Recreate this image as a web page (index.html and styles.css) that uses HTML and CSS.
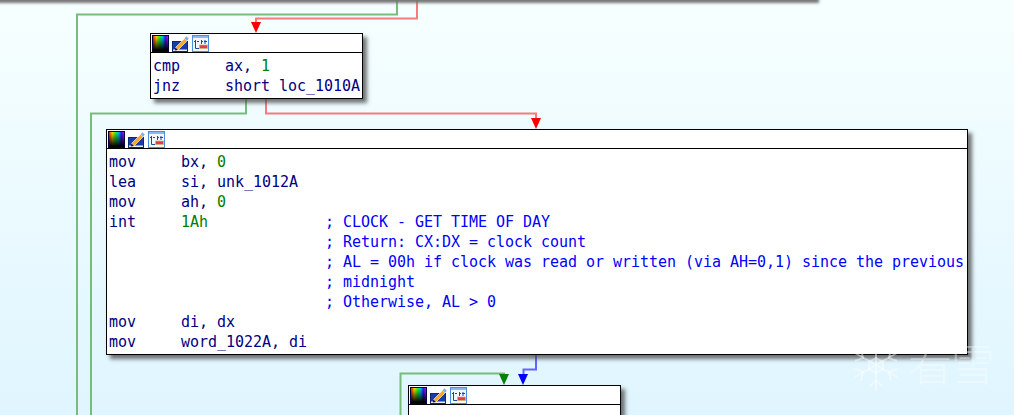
FILE: index.html
```html
<!DOCTYPE html>
<html lang="en">
<head>
<meta charset="utf-8">
<title>Graph view</title>
<link rel="stylesheet" href="styles.css">
</head>
<body>
<svg width="0" height="0" class="defs">
  <defs>
    <linearGradient id="hue" x1="0" y1="0" x2="1" y2="0">
      <stop offset="0" stop-color="#ff2000"/><stop offset=".22" stop-color="#ffe000"/><stop offset=".45" stop-color="#20ff20"/><stop offset=".65" stop-color="#00c0ff"/><stop offset=".82" stop-color="#2020ff"/><stop offset="1" stop-color="#e000e0"/>
    </linearGradient>
    <linearGradient id="dark" x1="0" y1="0" x2="0" y2="1">
      <stop offset="0" stop-color="#000" stop-opacity="0"/><stop offset=".95" stop-color="#000"/>
    </linearGradient>
    <symbol id="i-color" viewBox="0 0 17 17">
      <rect x=".5" y=".5" width="16" height="16" fill="#000020" stroke="#000040"/>
      <rect x="1" y="1" width="15" height="15" fill="url(#hue)"/>
      <rect x="1" y="1" width="15" height="15" fill="url(#dark)"/>
    </symbol>
    <symbol id="i-edit" viewBox="0 0 17 17">
      <rect x=".5" y="6.500" width="15" height="10" fill="#1c3aa8" stroke="#0c2a70"/>
      <rect x="1" y="14.500" width="14" height="1.500" fill="#e8f0fa"/>
      <path d="M3.500 12.500L12.500 3.500L15 6L6 15Z" fill="#f7a92a" stroke="#fff" stroke-width=".6"/>
      <path d="M12.500 3.500L14.400 1.200L16.800 3.600L15 6Z" fill="#7fb3d8"/>
      <path d="M3.500 12.500L2.800 15.500L6 15Z" fill="#20202c"/>
    </symbol>
    <symbol id="i-graph" viewBox="0 0 17 17">
      <rect x=".5" y=".5" width="16" height="16" fill="#f2f7ff" stroke="#4a8ce0"/>
      <rect x="1" y="1" width="15" height="2" fill="#8ab8f4"/>
      <path class="g-line" d="M2 6.500H4M5 6.500H7M9 6.500H11M12 6.500H15M3.500 5V13.500H7M9.500 5V9M13 5V9"/>
      <rect x="7.500" y="10" width="8" height="3.500" fill="#e03c50" stroke="#c8b868" stroke-width=".7"/>
    </symbol>
  </defs>
</svg>

<main class="canvas">
  <svg class="edges" width="1014" height="415" viewBox="0 0 1014 415">
    <g class="edge-green">
      <path d="M397 0V14.500H77V415"/>
      <path d="M246 98V113.500H91V415"/>
      <path d="M504 375V373.500H400.500V415"/>
    </g>
    <g class="edge-red">
      <path d="M417 0V18.500H256V24"/>
      <path d="M266 98V113.500H536V120"/>
    </g>
    <path class="edge-blue" d="M536 354V369.500H523.500V376"/>
    <path class="arrow-red" d="M251 22H261L256 33Z"/>
    <path class="arrow-red" d="M531 118H541L536 129Z"/>
    <path class="arrow-green" d="M499 374H509L504 385Z"/>
    <path class="arrow-blue" d="M518 374H528L523 385Z"/>
  </svg>

  <div class="top-node"></div>

  <section class="node node-a">
    <header class="node-head">
      <svg class="ico"><use href="#i-color"/></svg><svg class="ico"><use href="#i-edit"/></svg><svg class="ico"><use href="#i-graph"/></svg>
    </header>
    <pre class="code"><span class="op">cmp     ax, </span><span class="num">1</span>
<span class="op">jnz     short loc_1010A</span></pre>
  </section>

  <section class="node node-b">
    <header class="node-head">
      <svg class="ico"><use href="#i-color"/></svg><svg class="ico"><use href="#i-edit"/></svg><svg class="ico"><use href="#i-graph"/></svg>
    </header>
    <pre class="code"><span class="op">mov     bx, </span><span class="num">0</span>
<span class="op">lea     si, unk_1012A</span>
<span class="op">mov     ah, </span><span class="num">0</span>
<span class="op">int     </span><span class="num">1Ah</span>             <span class="cmt">; CLOCK - GET TIME OF DAY</span>
                        <span class="cmt">; Return: CX:DX = clock count</span>
                        <span class="cmt">; AL = 00h if clock was read or written (via AH=0,1) since the previous</span>
                        <span class="cmt">; midnight</span>
                        <span class="cmt">; Otherwise, AL &gt; 0</span>
<span class="op">mov     di, dx</span>
<span class="op">mov     word_1022A, di</span></pre>
  </section>

  <section class="node node-c">
    <header class="node-head">
      <svg class="ico"><use href="#i-color"/></svg><svg class="ico"><use href="#i-edit"/></svg><svg class="ico"><use href="#i-graph"/></svg>
    </header>
  </section>

  <div class="watermark">
    <svg class="flake" width="50" height="56" viewBox="4 0 50 56">
      <g>
        <path d="M29 2V54M8 16L50 40M8 40L50 16"/>
        <path d="M23 7L29 13L35 7M23 49L29 43L35 49M8 24L16 21L14 12M44 44L42 35L50 32M8 32L16 35L14 44M44 12L42 21L50 24"/>
        <path d="M29 21L36 25V32L29 36L22 32V25Z"/>
      </g>
    </svg>
    <span class="wm-text">看雪</span>
  </div>
</main>
</body>
</html>
```
FILE: styles.css
```css
* { box-sizing: border-box; }

html, body {
  margin: 0;
  padding: 0;
  height: 100%;
  overflow: hidden;
}

.defs { position: absolute; }

.canvas {
  position: relative;
  width: 1014px;
  height: 415px;
  overflow: hidden;
  background: linear-gradient(to bottom, #f6ffff 0%, #dff5ff 100%);
}

.edges {
  position: absolute;
  left: 0;
  top: 0;
}

.edges path { fill: none; stroke-width: 2; }
.edge-green path { stroke: #78bc7c; }
.edge-red path { stroke: #f87a7a; }
.edges .edge-blue { stroke: #6464ff; }
.edges .arrow-red { fill: #ff0000; stroke: none; }
.edges .arrow-green { fill: #0a800a; stroke: none; }
.edges .arrow-blue { fill: #0000ff; stroke: none; }

.top-node {
  position: absolute;
  left: -10px;
  top: -10px;
  width: 826px;
  height: 10px;
  box-shadow: 3px 3px 3px #777;
}

.node {
  position: absolute;
  background: #fff;
  border: 1px solid #000;
  box-shadow: 4px 4px 4px rgba(70, 70, 70, .75);
}

.node-a { left: 150px; top: 33px; width: 213px; height: 66px; }
.node-b { left: 106px; top: 129px; width: 862px; height: 226px; }
.node-c { left: 408px; top: 385px; width: 213px; height: 66px; }

.node-head {
  display: flex;
  align-items: flex-start;
  gap: 3px;
  height: 19px;
  padding: 1px 0 0 1px;
  border-bottom: 1px solid #000;
}

.ico {
  display: block;
  width: 17px;
  height: 17px;
  flex: none;
}

.g-line {
  fill: none;
  stroke: #1a4aa0;
  stroke-width: 1;
}

.code {
  margin: 0;
  padding: 3px 0 0 2px;
  font-family: "DejaVu Sans Mono", "Liberation Mono", monospace;
  font-size: 15px;
  letter-spacing: -0.03px;
  line-height: 20px;
  color: #000080;
}

.op { color: #000080; }
.num { color: #008000; }
.cmt { color: #0000ff; }

.watermark {
  position: absolute;
  left: 851px;
  top: 337px;
  display: flex;
  align-items: flex-start;
  gap: 7px;
  color: rgba(255, 255, 255, .4);
}

.flake { display: block; }
.flake path {
  fill: none;
  stroke: rgba(255, 255, 255, .45);
  stroke-width: 2;
}

.wm-text {
  font-family: "Noto Sans CJK SC", sans-serif;
  font-size: 44px;
  font-weight: 300;
  line-height: 50px;
  letter-spacing: -1px;
}
```
